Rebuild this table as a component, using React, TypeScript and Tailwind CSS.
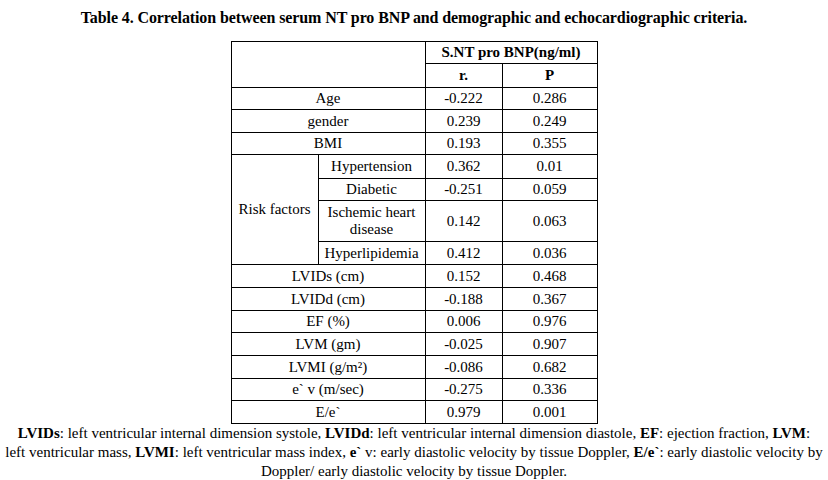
const serif = { fontFamily: '"Liberation Serif", "Times New Roman", serif' }

type Row = { label: string; r: string; p: string; h: string }

const topRows: Row[] = [
  { label: 'Age', r: '-0.222', p: '0.286', h: 'h-[22px]' },
  { label: 'gender', r: '0.239', p: '0.249', h: 'h-[23px]' },
  { label: 'BMI', r: '0.193', p: '0.355', h: 'h-[22px]' },
]

const riskRows: Row[] = [
  { label: 'Hypertension', r: '0.362', p: '0.01', h: 'h-[24px]' },
  { label: 'Diabetic', r: '-0.251', p: '0.059', h: 'h-[22px]' },
  { label: 'Ischemic heart disease', r: '0.142', p: '0.063', h: 'h-[41px]' },
  { label: 'Hyperlipidemia', r: '0.412', p: '0.036', h: 'h-[23px]' },
]

const echoRows: Row[] = [
  { label: 'LVIDs (cm)', r: '0.152', p: '0.468', h: 'h-[23px]' },
  { label: 'LVIDd (cm)', r: '-0.188', p: '0.367', h: 'h-[23px]' },
  { label: 'EF (%)', r: '0.006', p: '0.976', h: 'h-[22px]' },
  { label: 'LVM (gm)', r: '-0.025', p: '0.907', h: 'h-[23px]' },
  { label: 'LVMI (g/m²)', r: '-0.086', p: '0.682', h: 'h-[23px]' },
  { label: 'e` v (m/sec)', r: '-0.275', p: '0.336', h: 'h-[22px]' },
  { label: 'E/e`', r: '0.979', p: '0.001', h: 'h-[23px]' },
]

const cell = 'border border-black px-1 py-0 text-center align-middle leading-[17px]'

export default function App() {
  return (
    <div className="flex h-[480px] w-[828px] flex-col items-center bg-white text-black" style={serif}>
      <h1 className="mt-[9px] text-[16px] font-bold leading-[18px] tracking-[-0.1px]">
        Table 4. Correlation between serum NT pro BNP and demographic and echocardiographic criteria.
      </h1>

      <table className="mt-[14px] w-[366px] table-fixed border-collapse text-[15px]">
        <colgroup>
          <col className="w-[87px]" />
          <col className="w-[107px]" />
          <col className="w-[77px]" />
          <col className="w-[95px]" />
        </colgroup>
        <tbody>
          <tr className="h-[22px]">
            <td className={cell} rowSpan={2} colSpan={2}></td>
            <td className={`${cell} font-bold`} colSpan={2}>S.NT pro BNP(ng/ml)</td>
          </tr>
          <tr className="h-[24px]">
            <td className={`${cell} font-bold`}>r.</td>
            <td className={`${cell} font-bold`}>P</td>
          </tr>
          {topRows.map((row) => (
            <tr key={row.label} className={row.h}>
              <td className={cell} colSpan={2}>{row.label}</td>
              <td className={cell}>{row.r}</td>
              <td className={cell}>{row.p}</td>
            </tr>
          ))}
          {riskRows.map((row, i) => (
            <tr key={row.label} className={row.h}>
              {i === 0 && <td className={cell} rowSpan={4}>Risk factors</td>}
              <td className={cell}>{row.label}</td>
              <td className={cell}>{row.r}</td>
              <td className={cell}>{row.p}</td>
            </tr>
          ))}
          {echoRows.map((row) => (
            <tr key={row.label} className={row.h}>
              <td className={cell} colSpan={2}>{row.label}</td>
              <td className={cell}>{row.r}</td>
              <td className={cell}>{row.p}</td>
            </tr>
          ))}
        </tbody>
      </table>

      <p className="mt-0 w-[828px] text-center text-[15px] leading-[19px]">
        <b>LVIDs</b>: left ventricular internal dimension systole, <b>LVIDd</b>: left ventricular internal dimension diastole, <b>EF</b>: ejection fraction, <b>LVM</b>:
        <br />
        left ventricular mass, <b>LVMI</b>: left ventricular mass index, <b>e`</b> v: early diastolic velocity by tissue Doppler, <b>E/e`</b>: early diastolic velocity by
        <br />
        Doppler/ early diastolic velocity by tissue Doppler.
      </p>
    </div>
  )
}
